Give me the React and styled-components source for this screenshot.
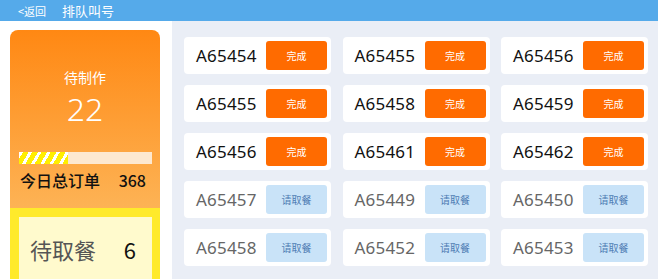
import React from "react";
import styled, { createGlobalStyle } from "styled-components";

const Global = createGlobalStyle`
  html, body { margin: 0; padding: 0; background: #fff; }
  body { font-family: "Noto Sans", "Noto Sans CJK SC", sans-serif; overflow: hidden; }
  * { box-sizing: border-box; }
`;

const Page = styled.div`
  width: 658px;
  height: 279px;
  display: flex;
  flex-direction: column;
  overflow: hidden;
`;

const Header = styled.div`
  height: 21px;
  flex: none;
  background: #55aaea;
  display: flex;
  align-items: center;
  padding-left: 18px;
  color: #fff;
  font-family: "Noto Sans CJK SC", sans-serif;
`;

const Back = styled.span`
  font-size: 11px;
  margin-right: 16px;
`;

const Title = styled.span`
  font-size: 13px;
`;

const Body = styled.div`
  flex: 1;
  display: flex;
  min-height: 0;
`;

const Side = styled.div`
  width: 172px;
  flex: none;
  background: #fff;
  padding: 9px 12px 0 10px;
`;

const StatCard = styled.div`
  height: 100%;
  border-radius: 8px 8px 0 0;
  overflow: hidden;
  display: flex;
  flex-direction: column;
`;

const OrangePart = styled.div`
  height: 178px;
  background: linear-gradient(180deg, #ff8813 0%, #fdb355 100%);
  display: flex;
  flex-direction: column;
  align-items: center;
  padding-top: 37px;
`;

const Label = styled.div`
  font-family: "Noto Sans CJK SC", sans-serif;
  color: #fff;
  font-size: 14px;
  line-height: 20px;
`;

const BigNum = styled.div`
  color: #fff;
  font-size: 32px;
  font-weight: 300;
  line-height: 40px;
  margin-top: 2px;
`;

const Track = styled.div`
  width: 133px;
  height: 12px;
  margin-top: 23px;
  background: #fde8cf;
  display: flex;
`;

const Fill = styled.div`
  height: 100%;
  background: repeating-linear-gradient(
    -60deg,
    #ffee00 0px,
    #ffee00 5px,
    #ffffff 5px,
    #ffffff 8px
  );
`;

const TotalRow = styled.div`
  align-self: stretch;
  display: flex;
  justify-content: space-between;
  padding: 0 14px 0 10px;
  margin-top: 6px;
  font-family: "Noto Sans CJK SC", sans-serif;
  font-size: 16px;
  font-weight: 500;
  line-height: 20px;
  color: #111;
`;

const YellowPart = styled.div`
  flex: 1;
  background: #ffea2b;
  padding: 9px 8px 0 9px;
`;

const PickupBox = styled.div`
  height: 100%;
  background: #fffacd;
  display: flex;
  align-items: flex-start;
  padding: 17px 16px 0 11px;
  justify-content: space-between;
  font-family: "Noto Sans CJK SC", sans-serif;
  font-size: 22px;
  line-height: 30px;
`;

const PickupLabel = styled.span`
  color: #555;
`;

const PickupNum = styled.span`
  color: #111;
`;

const Main = styled.div`
  flex: 1;
  background: #eaeef6;
  padding: 16px 11px 0 12px;
`;

const Grid = styled.div`
  display: grid;
  grid-template-columns: repeat(3, 147px);
  column-gap: 11.5px;
  row-gap: 11px;
`;

const Card = styled.div`
  height: 37px;
  background: #fff;
  border-radius: 4px;
  display: flex;
  align-items: center;
  justify-content: space-between;
  padding: 0 4px 0 12px;
`;

const OrderNo = styled.span`
  font-size: 17px;
  color: ${(p) => (p.$done ? "#111" : "#666")};
  letter-spacing: 0.2px;
`;

const Btn = styled.div`
  width: 61px;
  height: 29px;
  border-radius: 3px;
  display: flex;
  align-items: center;
  justify-content: center;
  font-family: "Noto Sans CJK SC", sans-serif;
  font-size: 10px;
  background: ${(p) => (p.$done ? "#ff6b00" : "#c9e3f8")};
  color: ${(p) => (p.$done ? "#fff" : "#4f7db4")};
`;

const orders = [
  ["A65454", true], ["A65455", true], ["A65456", true],
  ["A65455", true], ["A65458", true], ["A65459", true],
  ["A65456", true], ["A65461", true], ["A65462", true],
  ["A65457", false], ["A65449", false], ["A65450", false],
  ["A65458", false], ["A65452", false], ["A65453", false],
];

export default function App() {
  return (
    <>
      <Global />
      <Page>
        <Header>
          <Back>&lt;返回</Back>
          <Title>排队叫号</Title>
        </Header>
        <Body>
          <Side>
            <StatCard>
              <OrangePart>
                <Label>待制作</Label>
                <BigNum>22</BigNum>
                <Track>
                  <Fill style={{ width: "37%" }} />
                </Track>
                <TotalRow>
                  <span>今日总订单</span>
                  <span>368</span>
                </TotalRow>
              </OrangePart>
              <YellowPart>
                <PickupBox>
                  <PickupLabel>待取餐</PickupLabel>
                  <PickupNum>6</PickupNum>
                </PickupBox>
              </YellowPart>
            </StatCard>
          </Side>
          <Main>
            <Grid>
              {orders.map(([no, done], i) => (
                <Card key={i}>
                  <OrderNo $done={done}>{no}</OrderNo>
                  <Btn $done={done}>{done ? "完成" : "请取餐"}</Btn>
                </Card>
              ))}
            </Grid>
          </Main>
        </Body>
      </Page>
    </>
  );
}
